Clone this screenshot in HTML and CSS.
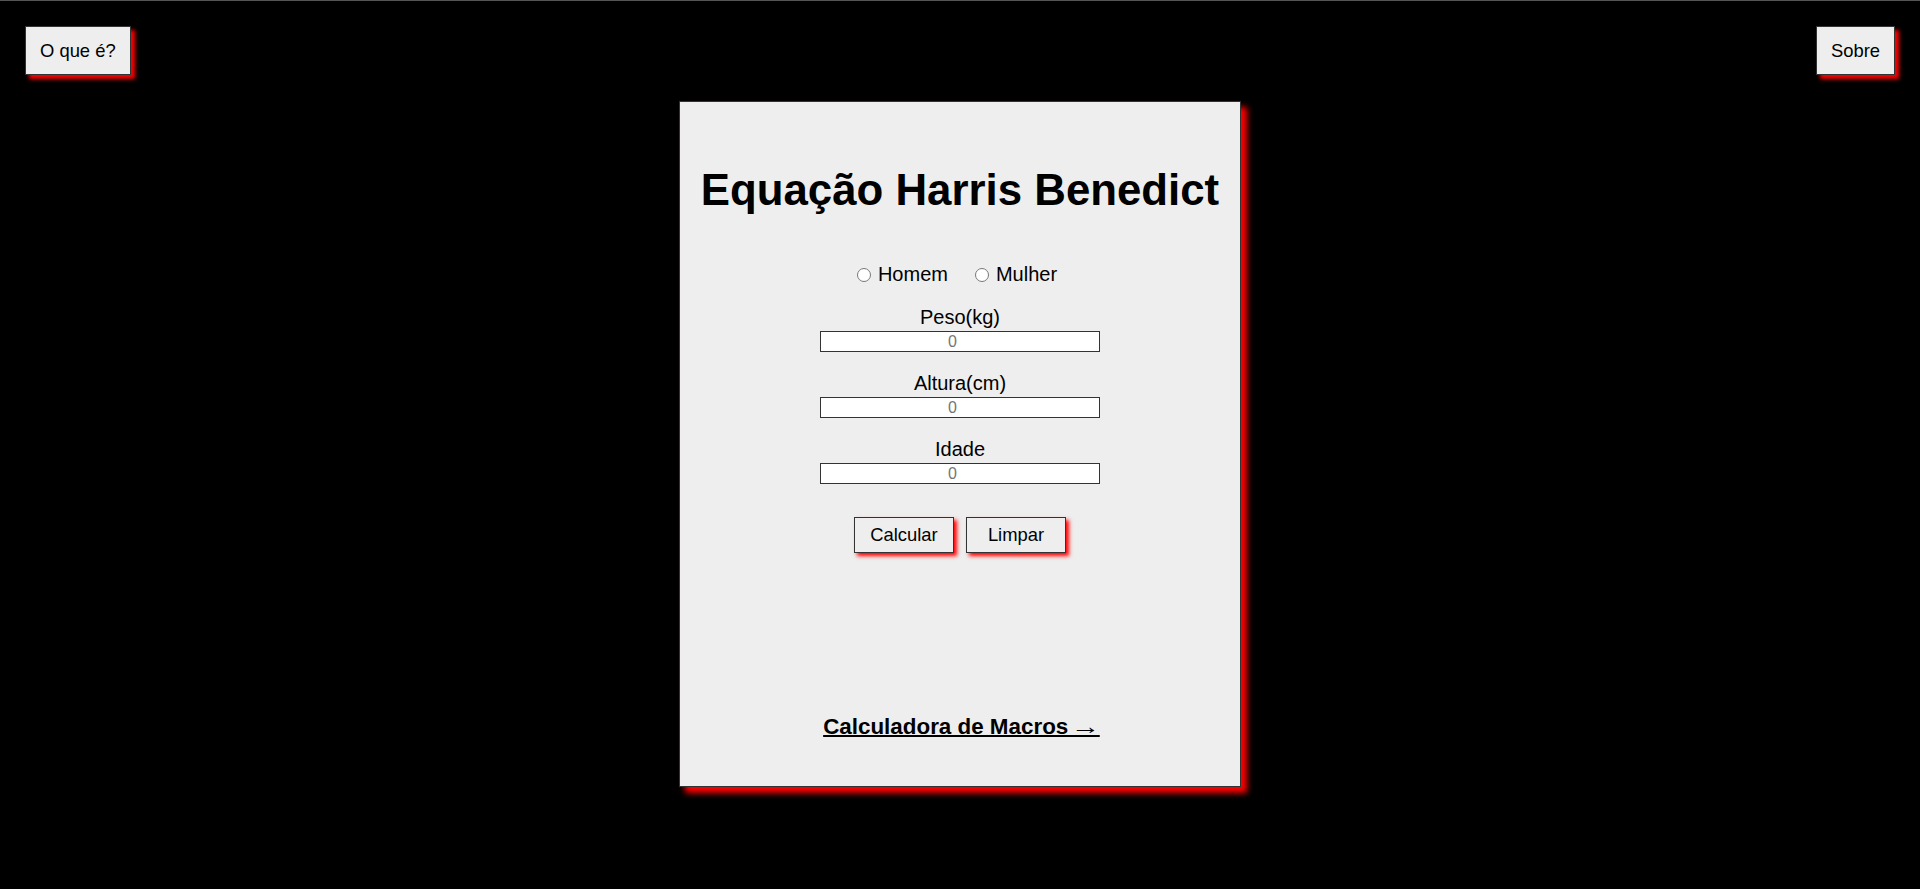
FILE: index.html
```html
<!DOCTYPE html>
<html lang="pt-BR">
<head>
<meta charset="utf-8">
<title>Equação Harris Benedict</title>
<link rel="stylesheet" href="styles.css">
</head>
<body>
<div class="topbar">
  <button class="nav-btn">O que é?</button>
  <button class="nav-btn">Sobre</button>
</div>
<main class="card">
  <h1 class="title">Equação Harris Benedict</h1>
  <div class="radios">
    <label class="radio"><input type="radio" name="sexo"><span>Homem</span></label>
    <label class="radio"><input type="radio" name="sexo"><span>Mulher</span></label>
  </div>
  <div class="field">
    <label class="field-label">Peso(kg)</label>
    <input class="field-input" type="number" placeholder="0">
  </div>
  <div class="field">
    <label class="field-label">Altura(cm)</label>
    <input class="field-input" type="number" placeholder="0">
  </div>
  <div class="field">
    <label class="field-label">Idade</label>
    <input class="field-input" type="number" placeholder="0">
  </div>
  <div class="actions">
    <button class="act-btn">Calcular</button>
    <button class="act-btn">Limpar</button>
  </div>
  <a class="macro-link" href="#">Calculadora de Macros <span class="arrow">→</span></a>
</main>
</body>
</html>
```
FILE: styles.css
```css
html, body {
  margin: 0;
  padding: 0;
}
body {
  background: #000;
  border-top: 1px solid #555;
  min-height: 888px;
  box-sizing: border-box;
  font-family: "Liberation Sans", Arial, sans-serif;
  color: #000;
}
.topbar {
  display: flex;
  justify-content: space-between;
  padding: 25px 25px 0;
}
.nav-btn {
  height: 49px;
  padding: 0 14px;
  background: #eee;
  border: 1px solid #333;
  box-shadow: 4px 4px 4px #f00;
  font-family: "Liberation Sans", Arial, sans-serif;
  font-size: 18.4px;
  color: #000;
  cursor: pointer;
}
.card {
  width: 562px;
  height: 686px;
  box-sizing: border-box;
  margin: 26px auto 0;
  background: #eee;
  border: 1px solid #333;
  box-shadow: 6px 6px 6px #f00;
  display: flex;
  flex-direction: column;
  align-items: center;
  padding-top: 62px;
}
.title {
  margin: 0;
  font-size: 43.8px;
  line-height: 51px;
  font-weight: bold;
  white-space: nowrap;
}
.radios {
  margin-top: 48px;
  display: flex;
  gap: 27px;
  padding-right: 6px;
  font-size: 20px;
  line-height: 23px;
}
.radio {
  display: inline-flex;
  align-items: center;
}
.radio input {
  width: 14px;
  height: 14px;
  margin: 0 7px 0 0;
}
.field {
  margin-top: 20px;
  display: flex;
  flex-direction: column;
  align-items: center;
}
.field-label {
  font-size: 20px;
  line-height: 23px;
  margin-bottom: 2px;
}
.field-input {
  width: 280px;
  height: 21px;
  box-sizing: border-box;
  border: 1px solid #333;
  background: #fff;
  padding: 1px 2px;
  font-family: "Liberation Sans", Arial, sans-serif;
  font-size: 16px;
  text-align: center;
  outline: none;
}
.field-input::placeholder {
  color: #757575;
}
.actions {
  margin-top: 33px;
  display: flex;
  gap: 12px;
}
.act-btn {
  width: 100px;
  height: 36px;
  background: #eee;
  border: 1px solid #333;
  box-shadow: 3px 3px 4px #f00;
  font-family: "Liberation Sans", Arial, sans-serif;
  font-size: 18.4px;
  color: #000;
  padding: 0;
  cursor: pointer;
}
.macro-link {
  margin-top: auto;
  margin-bottom: 46px;
  font-size: 22.4px;
  line-height: 26px;
  font-weight: bold;
  color: #000;
  text-decoration: underline;
  text-decoration-thickness: 2px;
}
.arrow {
  display: inline-block;
  transform: scaleX(1.3);
  transform-origin: center;
  text-decoration: underline;
  text-decoration-thickness: 2px;
}
```
